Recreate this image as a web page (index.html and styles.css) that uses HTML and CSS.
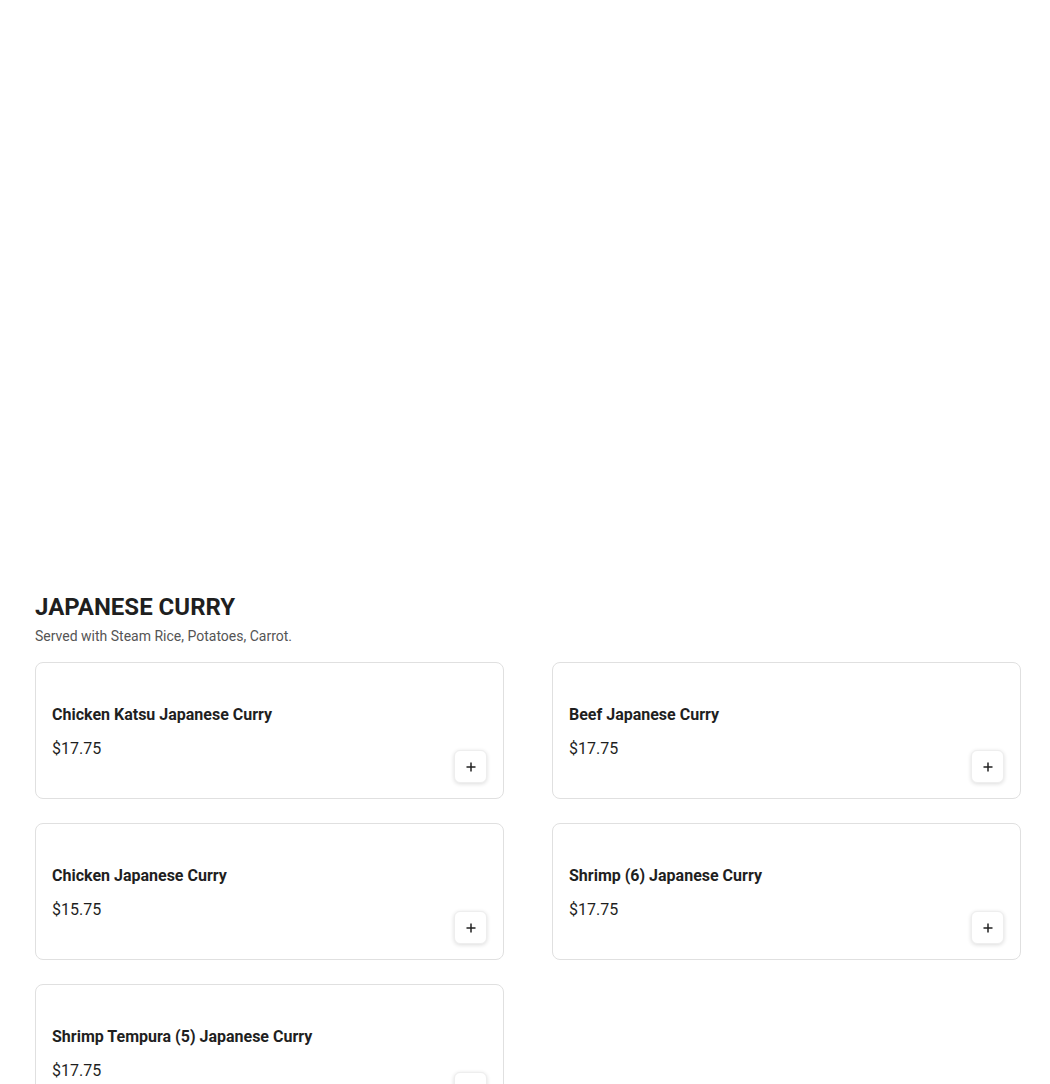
FILE: index.html
```html
<!DOCTYPE html>
<html>
<head>
<meta charset="utf-8">
<link rel="stylesheet" href="styles.css">
</head>
<body>
<div class="page">
  <div class="hero"></div>
  <section class="category">
    <h2 class="cat-title">JAPANESE CURRY</h2>
    <p class="cat-desc">Served with Steam Rice, Potatoes, Carrot.</p>
    <div class="grid">
      <div class="card">
        <div class="info">
          <div class="name">Chicken Katsu Japanese Curry</div>
          <div class="price">$17.75</div>
        </div>
        <button class="add" aria-label="Add"><svg width="12" height="12" viewBox="0 0 12 12"><path d="M6 1.5v9M1.5 6h9" stroke="#222" stroke-width="1.5"/></svg></button>
      </div>
      <div class="card">
        <div class="info">
          <div class="name">Beef Japanese Curry</div>
          <div class="price">$17.75</div>
        </div>
        <button class="add" aria-label="Add"><svg width="12" height="12" viewBox="0 0 12 12"><path d="M6 1.5v9M1.5 6h9" stroke="#222" stroke-width="1.5"/></svg></button>
      </div>
      <div class="card">
        <div class="info">
          <div class="name">Chicken Japanese Curry</div>
          <div class="price">$15.75</div>
        </div>
        <button class="add" aria-label="Add"><svg width="12" height="12" viewBox="0 0 12 12"><path d="M6 1.5v9M1.5 6h9" stroke="#222" stroke-width="1.5"/></svg></button>
      </div>
      <div class="card">
        <div class="info">
          <div class="name">Shrimp (6) Japanese Curry</div>
          <div class="price">$17.75</div>
        </div>
        <button class="add" aria-label="Add"><svg width="12" height="12" viewBox="0 0 12 12"><path d="M6 1.5v9M1.5 6h9" stroke="#222" stroke-width="1.5"/></svg></button>
      </div>
      <div class="card">
        <div class="info">
          <div class="name">Shrimp Tempura (5) Japanese Curry</div>
          <div class="price">$17.75</div>
        </div>
        <button class="add" aria-label="Add"><svg width="12" height="12" viewBox="0 0 12 12"><path d="M6 1.5v9M1.5 6h9" stroke="#222" stroke-width="1.5"/></svg></button>
      </div>
    </div>
  </section>
</div>
</body>
</html>
```
FILE: styles.css
```css
* { box-sizing: border-box; }
html, body { margin: 0; padding: 0; background: #fff; }
body { font-family: Roboto, "Liberation Sans", Arial, sans-serif; color: #1f1f1f; }
.page { padding: 0 29px 0 35px; }
.hero { height: 593px; }
.cat-title { margin: 0; font-size: 24px; line-height: 28px; font-weight: 700; color: #1f1f1f; }
.cat-desc { margin: 0; font-size: 14px; line-height: 30px; color: #555; }
.grid { margin-top: 11px; display: grid; grid-template-columns: 1fr 1fr; column-gap: 48px; row-gap: 24px; }
.card { border: 1px solid #e0e0e0; border-radius: 8px; padding: 42px 16px 15px 16px; display: flex; justify-content: space-between; align-items: flex-end; min-height: 137px; }
.info { display: flex; flex-direction: column; gap: 12px; align-self: flex-start; }
.name { font-size: 16px; line-height: 20px; font-weight: 700; color: #1f1f1f; }
.price { font-size: 16px; line-height: 24px; color: #1f1f1f; }
.add { width: 33px; height: 33px; border: 1px solid #eee; border-radius: 6px; background: #fff; box-shadow: 0 1px 4px rgba(0,0,0,0.14); display: flex; align-items: center; justify-content: center; padding: 0; cursor: pointer; }
.add svg { display: block; }
```
